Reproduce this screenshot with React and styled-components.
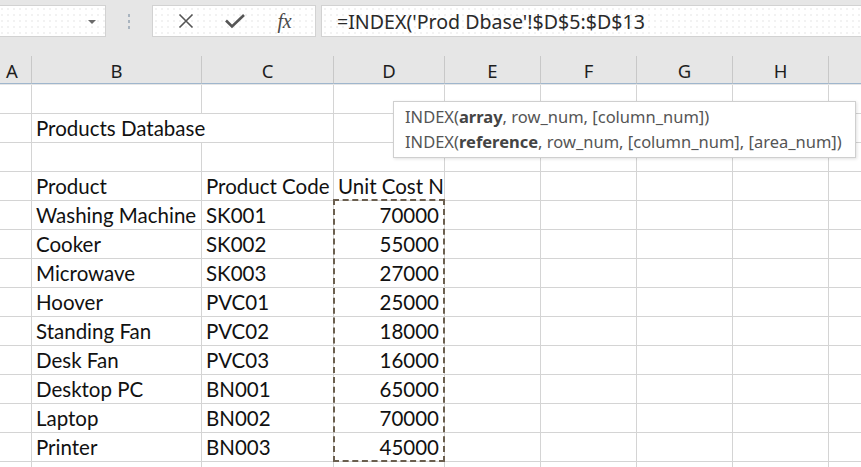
import React from 'react';
import styled, { createGlobalStyle } from 'styled-components';

const GlobalStyle = createGlobalStyle`
  html, body {
    margin: 0;
    padding: 0;
    background: #ffffff;
    overflow: hidden;
  }
  body {
    font-family: 'Lato', 'Liberation Sans', sans-serif;
  }
`;

const COLS = [
  { key: 'A', width: 32 },
  { key: 'B', width: 170 },
  { key: 'C', width: 132 },
  { key: 'D', width: 111 },
  { key: 'E', width: 96 },
  { key: 'F', width: 96 },
  { key: 'G', width: 96 },
  { key: 'H', width: 96 },
  { key: 'I', width: 40 }
];

const ROW_H = 29;

const products = [
  ['Washing Machine', 'SK001', '70000'],
  ['Cooker', 'SK002', '55000'],
  ['Microwave', 'SK003', '27000'],
  ['Hoover', 'PVC01', '25000'],
  ['Standing Fan', 'PVC02', '18000'],
  ['Desk Fan', 'PVC03', '16000'],
  ['Desktop PC', 'BN001', '65000'],
  ['Laptop', 'BN002', '70000'],
  ['Printer', 'BN003', '45000']
];

// each row: list of [text, span]; the title spills over the empty C cell
const plain = vals => COLS.map((c, i) => [vals[i] || '', 1]);
const rows = [
  plain([]),
  [['', 1], ['Products Database', 2], ...COLS.slice(3).map(() => ['', 1])],
  plain([]),
  plain(['', 'Product', 'Product Code', 'Unit Cost N']),
  ...products.map(p => plain(['', p[0], p[1], p[2]])),
  plain([])
];

const Page = styled.div`
  width: 861px;
  height: 467px;
  display: flex;
  flex-direction: column;
  background: #e6e6e6;
  overflow: hidden;
`;

const Toolbar = styled.div`
  display: flex;
  align-items: stretch;
  height: 34px;
  padding-top: 5px;
`;

const dotted = `
  background-color: #ffffff;
  background-image: radial-gradient(#e2e2e2 0.6px, transparent 0.8px);
  background-size: 6px 6px;
  border: 1px solid #d2d2d2;
  box-sizing: border-box;
`;

const NameBox = styled.div`
  ${dotted}
  width: 108px;
  margin-left: -2px;
  display: flex;
  align-items: center;
  justify-content: flex-end;
  padding-right: 9px;
`;

const Caret = styled.span`
  width: 0;
  height: 0;
  border-left: 4px solid transparent;
  border-right: 4px solid transparent;
  border-top: 4px solid #6a6a6a;
  margin-top: 1px;
`;

const Grip = styled.div`
  width: 46px;
  display: flex;
  flex-direction: column;
  align-items: center;
  justify-content: center;
  gap: 3px;
`;

const GripDot = styled.span`
  width: 2px;
  height: 3px;
  background: #a9b4bf;
`;

const ButtonGroup = styled.div`
  ${dotted}
  width: 164px;
  display: flex;
  align-items: center;
  justify-content: space-around;
  padding: 0 6px 0 8px;
`;

const IconButton = styled.div`
  width: 36px;
  height: 30px;
  display: flex;
  align-items: center;
  justify-content: center;
`;

const Fx = styled.span`
  font-family: 'Liberation Serif', 'DejaVu Serif', serif;
  font-style: italic;
  font-size: 20px;
  color: #4a4a4a;
  letter-spacing: -0.5px;
`;

const FormulaBar = styled.div`
  ${dotted}
  flex: 1;
  margin-left: 5px;
  margin-right: -4px;
  display: flex;
  align-items: center;
  padding-left: 15px;
  padding-top: 1px;
  font-family: 'Noto Sans', 'Open Sans', sans-serif;
  font-size: 19.6px;
  color: #2a2a2a;
  white-space: nowrap;
`;

const SheetArea = styled.div`
  position: relative;
  margin-top: 19px;
  flex: 1;
`;

const Grid = styled.div`
  display: grid;
  grid-template-columns: ${COLS.map(c => `${c.width}px`).join(' ')};
  grid-auto-rows: ${ROW_H}px;
`;

const HeaderCell = styled.div`
  height: 28px;
  box-sizing: border-box;
  background: #e6e6e6;
  border-right: 1px solid #c8c8c8;
  border-bottom: 1px solid #9fb6cd;
  display: flex;
  align-items: center;
  justify-content: ${p => (p.$left ? 'flex-start' : 'center')};
  padding-left: ${p => (p.$left ? '6px' : '0')};
  font-family: 'Noto Sans', 'Open Sans', sans-serif;
  font-size: 18.5px;
  color: #1e1e1e;
  padding-top: 2px;
`;

const Cell = styled.div`
  grid-column: span ${p => p.$span || 1};
  box-sizing: border-box;
  background: #ffffff;
  border-right: 1px solid #d4d4d4;
  border-bottom: 1px solid #d4d4d4;
  display: flex;
  align-items: flex-end;
  justify-content: ${p => (p.$num ? 'flex-end' : 'flex-start')};
  padding: 0 ${p => (p.$num ? '5px' : '0')} 1px 4px;
  font-family: 'Lato', 'Liberation Sans', sans-serif;
  font-size: 20.5px;
  line-height: 25px;
  color: #111111;
  white-space: nowrap;
`;

const Marquee = styled.div`
  position: absolute;
  box-sizing: border-box;
  border: 2px dashed #6b5f4f;
  pointer-events: none;
`;

const Tooltip = styled.div`
  position: absolute;
  left: 393px;
  top: 45px;
  width: 463px;
  height: 57px;
  box-sizing: border-box;
  background: #ffffff;
  border: 1px solid #cfcfcf;
  box-shadow: 1px 1px 3px rgba(0, 0, 0, 0.12);
  padding: 2px 0 0 11px;
  font-family: 'Noto Sans', 'Open Sans', sans-serif;
  font-size: 16.5px;
  line-height: 25px;
  color: #555555;
  white-space: nowrap;
`;

const Line = styled.div``;

const Arg = styled.b`
  font-weight: 700;
  color: #444444;
`;

const CancelIcon = () => (
  <svg width="18" height="18" viewBox="0 0 18 18">
    <path d="M2.5 2.5 L15.5 15.5 M15.5 2.5 L2.5 15.5" stroke="#555" strokeWidth="1.6" fill="none" />
  </svg>
);

const CheckIcon = () => (
  <svg width="22" height="18" viewBox="0 0 22 18">
    <path d="M2 8.5 L8 14.5 L20 3" stroke="#555" strokeWidth="2.6" fill="none" strokeLinejoin="miter" />
  </svg>
);

export default function App() {
  const dLeft = COLS[0].width + COLS[1].width + COLS[2].width - 1;
  const dWidth = COLS[3].width + 1;
  const headerH = 28;

  return (
    <>
      <GlobalStyle />
      <Page>
        <Toolbar>
          <NameBox>
            <Caret />
          </NameBox>
          <Grip>
            <GripDot />
            <GripDot />
            <GripDot />
          </Grip>
          <ButtonGroup>
            <IconButton><CancelIcon /></IconButton>
            <IconButton><CheckIcon /></IconButton>
            <IconButton><Fx>fx</Fx></IconButton>
          </ButtonGroup>
          <FormulaBar>=INDEX('Prod Dbase'!$D$5:$D$13</FormulaBar>
        </Toolbar>

        <SheetArea>
          <Grid>
            {COLS.map((c, i) => (
              <HeaderCell key={c.key} $left={i === 0}>
                {c.key === 'I' ? '' : c.key}
              </HeaderCell>
            ))}
            {rows.map((r, ri) =>
              r.map(([text, span], ci) => (
                <Cell
                  key={`${ri}-${ci}`}
                  $span={span}
                  $num={ci === 3 && ri >= 4}
                >
                  {text}
                </Cell>
              ))
            )}
          </Grid>
          <Marquee
            style={{
              left: dLeft,
              width: dWidth,
              top: headerH + 4 * ROW_H - 1,
              height: products.length * ROW_H + 2
            }}
          />
          <Tooltip>
            <Line>INDEX(<Arg>array</Arg>, row_num, [column_num])</Line>
            <Line>INDEX(<Arg>reference</Arg>, row_num, [column_num], [area_num])</Line>
          </Tooltip>
        </SheetArea>
      </Page>
    </>
  );
}
